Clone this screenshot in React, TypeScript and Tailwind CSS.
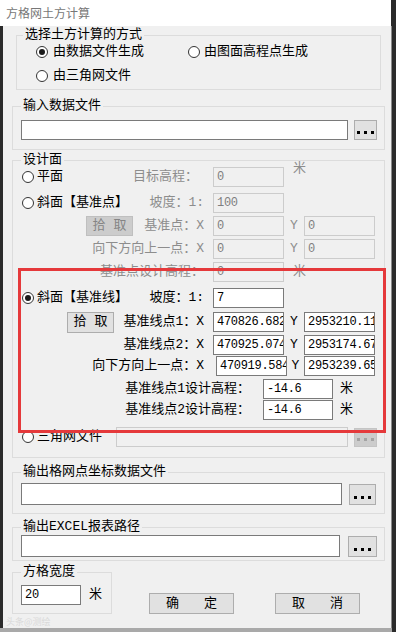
import React from "react";

type Kids = { children?: React.ReactNode };

function Radio({ checked = false }: { checked?: boolean }) {
  return (
    <span className="flex h-[12px] w-[12px] shrink-0 items-center justify-center rounded-full border border-[#333333] bg-white">
      {checked && <span className="h-[6px] w-[6px] rounded-full bg-[#1a1a1a]" />}
    </span>
  );
}

function Field({ value = "", disabled = false, className = "" }: { value?: string; disabled?: boolean; className?: string }) {
  return (
    <div
      className={`flex shrink-0 items-center overflow-hidden whitespace-nowrap border px-[3px] text-[12px] leading-[14px] tracking-[-0.3px] ${
        disabled ? "border-[#cccccc] bg-[#f0f0f0] text-[#7f7f7f]" : "border-[#7a7a7a] bg-white text-black"
      } ${className}`}
    >
      {value}
    </div>
  );
}

function Btn({ children, disabled = false, className = "" }: Kids & { disabled?: boolean; className?: string }) {
  return (
    <div
      className={`flex shrink-0 items-center border text-[13px] leading-[14px] ${
        disabled ? "border-[#bfbfbf] bg-[#cccccc] text-[#858585]" : "border-[#adadad] bg-[#e1e1e1] text-black"
      } ${className}`}
    >
      {children}
    </div>
  );
}

function Dots({ disabled = false, className = "" }: { disabled?: boolean; className?: string }) {
  const dot = disabled ? "h-[3px] w-[3px] bg-[#a3a3a3]" : "h-[3px] w-[3px] bg-black";
  return (
    <div
      className={`flex shrink-0 items-end justify-center gap-[4px] border pb-[5px] ${
        disabled ? "border-[#c4c4c4] bg-[#cccccc]" : "border-[#adadad] bg-[#e1e1e1]"
      } ${className}`}
    >
      <span className={dot} />
      <span className={dot} />
      <span className={dot} />
    </div>
  );
}

function Group({ title, className = "", legend = "left-[8px]", children }: Kids & { title: string; className?: string; legend?: string }) {
  return (
    <div className={`relative shrink-0 border border-[#dcdcdc] ${className}`}>
      <span className={`absolute -top-[8px] whitespace-nowrap bg-[#f0f0f0] px-[2px] text-[13px] leading-[14px] text-black ${legend}`}>
        {title}
      </span>
      {children}
    </div>
  );
}

const gray = "text-[#8d8d8d]";

function YLabel({ disabled = false, w = "w-[20px]" }: { disabled?: boolean; w?: string }) {
  return <span className={`shrink-0 text-center ${w} ${disabled ? gray : "text-black"}`}>Y</span>;
}

export default function App() {
  return (
    <div className="relative h-[632px] w-[396px] overflow-hidden bg-[#2b2b2b] font-['Liberation_Mono','Noto_Sans_CJK_SC',monospace] text-[13px] leading-[20px] text-black">
      {/* title bar */}
      <div className="flex h-[26px] w-[391px] items-center bg-white pl-[6px] font-['Noto_Sans_CJK_SC',sans-serif] text-[12px] text-[#777777]">
        方格网土方计算
      </div>

      <div className="flex">
        <div className="w-[3px] shrink-0" />
        <div className="relative flex h-[602px] w-[389px] shrink-0 flex-col border-r border-[#8a8a8a] bg-[#f0f0f0]">
          {/* group 1 */}
          <Group title="选择土方计算的方式" className="ml-[13px] mt-[9px] h-[55px] w-[365px] pl-[19px] pt-[6px]" legend="left-[6px]">
            <div className="flex h-[20px] items-center">
              <div className="flex w-[152px] items-center">
                <Radio checked />
                <span className="ml-[5px]">由数据文件生成</span>
              </div>
              <Radio />
              <span className="ml-[4px]">由图面高程点生成</span>
            </div>
            <div className="mt-[4px] flex h-[20px] items-center">
              <Radio />
              <span className="ml-[5px]">由三角网文件</span>
            </div>
          </Group>

          {/* group 2 */}
          <Group title="输入数据文件" className="ml-[9px] mt-[16px] h-[44px] w-[373px] pl-[8px] pt-[13px]">
            <div className="flex items-center">
              <Field className="h-[20px] w-[327px]" />
              <Dots className="ml-[6px] h-[20px] w-[23px]" />
            </div>
          </Group>

          {/* group 3 */}
          <Group title="设计面" className="ml-[9px] mt-[10px] h-[298px] w-[373px] pl-[9px] pt-[6px]">
            {/* A */}
            <div className="flex h-[20px] items-center">
              <div className="flex w-[182px] items-center">
                <Radio />
                <span className="ml-[3px]">平面</span>
                <span className={`ml-auto pr-[6px] ${gray}`}>目标高程：</span>
              </div>
              <Field disabled value="0" className="ml-[9px] h-[20px] w-[71px]" />
              <span className={`-mt-[5px] ml-[9px] self-start leading-[14px] ${gray}`}>米</span>
            </div>
            {/* B */}
            <div className="mt-[6px] flex h-[20px] items-center">
              <div className="flex w-[182px] items-center">
                <Radio />
                <span className="ml-[3px]">斜面【基准点】</span>
                <span className={`ml-auto ${gray}`}>坡度：1:</span>
              </div>
              <Field disabled value="100" className="ml-[9px] h-[20px] w-[71px]" />
            </div>
            {/* C */}
            <div className="mt-[3px] flex h-[20px] items-center">
              <div className="flex w-[182px] items-center">
                <Btn disabled className="ml-[64px] h-[20px] w-[47px] justify-center">拾 取</Btn>
                <span className={`ml-auto ${gray}`}>基准点：X</span>
              </div>
              <Field disabled value="0" className="ml-[9px] h-[20px] w-[71px]" />
              <YLabel disabled />
              <Field disabled value="0" className="h-[20px] w-[71px]" />
            </div>
            {/* D */}
            <div className="mt-[3px] flex h-[20px] items-center">
              <div className="flex w-[182px] items-center">
                <span className={`ml-auto ${gray}`}>向下方向上一点：X</span>
              </div>
              <Field disabled value="0" className="ml-[9px] h-[20px] w-[71px]" />
              <YLabel disabled />
              <Field disabled value="0" className="h-[20px] w-[71px]" />
            </div>
            {/* E */}
            <div className="mt-[3px] flex h-[20px] items-center">
              <div className="flex w-[182px] items-center">
                <span className={`ml-auto ${gray}`}>基准点设计高程：</span>
              </div>
              <Field disabled value="0" className="ml-[9px] h-[20px] w-[71px]" />
              <span className={`ml-[9px] ${gray}`}>米</span>
            </div>
            {/* F */}
            <div className="mt-[6px] flex h-[20px] items-center">
              <div className="flex w-[182px] items-center">
                <Radio checked />
                <span className="ml-[3px]">斜面【基准线】</span>
                <span className="ml-auto">坡度：1:</span>
              </div>
              <Field value="7" className="ml-[9px] h-[20px] w-[71px]" />
            </div>
            {/* G */}
            <div className="mt-[4px] flex h-[20px] items-center">
              <div className="flex w-[182px] items-center">
                <Btn className="ml-[45px] h-[21px] w-[47px] justify-center">拾 取</Btn>
                <span className="ml-auto">基准线点1：X</span>
              </div>
              <Field value="470826.682" className="ml-[9px] h-[20px] w-[71px]" />
              <YLabel />
              <Field value="2953210.11" className="h-[20px] w-[71px]" />
            </div>
            {/* H */}
            <div className="mt-[3px] flex h-[20px] items-center">
              <div className="flex w-[182px] items-center">
                <span className="ml-auto">基准线点2：X</span>
              </div>
              <Field value="470925.074" className="ml-[9px] h-[20px] w-[71px]" />
              <YLabel />
              <Field value="2953174.67" className="h-[20px] w-[71px]" />
            </div>
            {/* I */}
            <div className="mt-[1px] flex h-[20px] items-center">
              <div className="flex w-[182px] items-center">
                <span className="ml-auto">向下方向上一点：X</span>
              </div>
              <Field value="470919.584" className="ml-[12px] h-[20px] w-[71px]" />
              <YLabel w="w-[17px]" />
              <Field value="2953239.65" className="h-[20px] w-[71px]" />
            </div>
            {/* J */}
            <div className="mt-[3px] flex h-[20px] items-center">
              <div className="flex w-[228px] items-center">
                <span className="ml-auto">基准线点1设计高程：</span>
              </div>
              <Field value="-14.6" className="ml-[13px] h-[20px] w-[70px]" />
              <span className="ml-[7px]">米</span>
            </div>
            {/* K */}
            <div className="mt-[1px] flex h-[20px] items-center">
              <div className="flex w-[228px] items-center">
                <span className="ml-auto">基准线点2设计高程：</span>
              </div>
              <Field value="-14.6" className="ml-[13px] h-[20px] w-[70px]" />
              <span className="ml-[7px]">米</span>
            </div>
            {/* L */}
            <div className="mt-[7px] flex h-[20px] items-center">
              <div className="flex w-[94px] items-center">
                <Radio />
                <span className="ml-[3px]">三角网文件</span>
              </div>
              <Field disabled className="h-[20px] w-[232px]" />
              <Dots disabled className="ml-[6px] h-[19px] w-[23px]" />
            </div>
          </Group>

          {/* group 4 */}
          <Group title="输出格网点坐标数据文件" className="ml-[9px] mt-[14px] h-[42px] w-[373px] pl-[8px] pt-[10px]">
            <div className="flex items-center">
              <Field className="h-[22px] w-[321px]" />
              <Dots className="ml-[7px] h-[21px] w-[27px]" />
            </div>
          </Group>

          {/* group 5 */}
          <Group title="输出EXCEL报表路径" className="ml-[9px] mt-[13px] h-[34px] w-[373px] pl-[8px] pt-[7px]">
            <div className="flex items-center">
              <Field className="h-[22px] w-[319px]" />
              <Dots className="ml-[8px] h-[21px] w-[29px]" />
            </div>
          </Group>

          {/* bottom row */}
          <div className="mt-[11px] flex items-end">
            <Group title="方格宽度" className="ml-[9px] h-[42px] w-[100px] pl-[8px] pt-[12px]">
              <div className="flex h-[20px] items-center">
                <Field value="20" className="h-[20px] w-[60px]" />
                <span className="ml-[8px]">米</span>
              </div>
            </Group>
            <Btn className="ml-[37px] h-[21px] w-[85px] justify-between px-[16px]">
              <span>确</span>
              <span>定</span>
            </Btn>
            <Btn className="ml-[41px] h-[21px] w-[85px] justify-between px-[16px]">
              <span>取</span>
              <span>消</span>
            </Btn>
          </div>

          <span className="absolute bottom-[0px] left-[3px] font-['Noto_Sans_CJK_SC',sans-serif] text-[9px] leading-[12px] text-[#d9d9d9]">
            头条@测绘
          </span>
        </div>
      </div>
      <div className="h-[4px] w-[392px] bg-[#a9a9a9]" />

      {/* red annotation box */}
      <div className="pointer-events-none absolute left-[18px] top-[268px] h-[165px] w-[368px] border-[3px] border-[#e5393b]" />
    </div>
  );
}
